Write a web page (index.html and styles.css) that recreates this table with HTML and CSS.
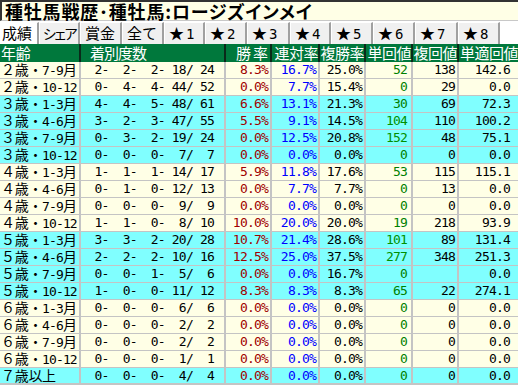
FILE: index.html
```html
<!DOCTYPE html>
<html lang="ja">
<head>
<meta charset="utf-8">
<title>種牡馬戦歴</title>
<link rel="stylesheet" href="styles.css">
</head>
<body>
<div class="title">種牡馬戦歴･種牡馬:ロージズインメイ</div>
<div class="tabs">
  <div class="tab active t1">成績</div>
  <div class="tab t2 sh">シェア</div>
  <div class="tab t3">賞金</div>
  <div class="tab t3">全て</div>
  <div class="tab t2">★<span class="a">1</span></div>
  <div class="tab t3">★<span class="a">2</span></div>
  <div class="tab t4">★<span class="a">3</span></div>
  <div class="tab t2">★<span class="a">4</span></div>
  <div class="tab t3">★<span class="a">5</span></div>
  <div class="tab t3">★<span class="a">6</span></div>
  <div class="tab t4">★<span class="a">7</span></div>
  <div class="tab t3">★<span class="a">8</span></div>
</div>
<div class="grid">
  <div class="row head">
    <div class="c c1">年齢</div><div class="c c2">着別度数</div><div class="c r wide">勝率</div><div class="c r">連対率</div><div class="c r">複勝率</div><div class="c r">単回値</div><div class="c r">複回値</div><div class="c r">単適回値</div>
  </div>
  <div class="row y"><div class="c c1">２歳・<span class="a">7-9</span>月</div><div class="c n c2"> 2-  2-  2- 18/ 24</div><div class="c n win">8.3%</div><div class="c n ren">16.7%</div><div class="c n fuku">25.0%</div><div class="c n tan">52</div><div class="c n fk">138</div><div class="c n tt">142.6</div></div>
  <div class="row y"><div class="c c1">２歳・<span class="a">10-12</span></div><div class="c n c2"> 0-  4-  4- 44/ 52</div><div class="c n win">0.0%</div><div class="c n ren">7.7%</div><div class="c n fuku">15.4%</div><div class="c n tan">0</div><div class="c n fk">29</div><div class="c n tt">0.0</div></div>
  <div class="row b"><div class="c c1">３歳・<span class="a">1-3</span>月</div><div class="c n c2"> 4-  4-  5- 48/ 61</div><div class="c n win">6.6%</div><div class="c n ren">13.1%</div><div class="c n fuku">21.3%</div><div class="c n tan">30</div><div class="c n fk">69</div><div class="c n tt">72.3</div></div>
  <div class="row b"><div class="c c1">３歳・<span class="a">4-6</span>月</div><div class="c n c2"> 3-  2-  3- 47/ 55</div><div class="c n win">5.5%</div><div class="c n ren">9.1%</div><div class="c n fuku">14.5%</div><div class="c n tan hi">104</div><div class="c n fk">110</div><div class="c n tt">100.2</div></div>
  <div class="row b"><div class="c c1">３歳・<span class="a">7-9</span>月</div><div class="c n c2"> 0-  3-  2- 19/ 24</div><div class="c n win">0.0%</div><div class="c n ren">12.5%</div><div class="c n fuku">20.8%</div><div class="c n tan hi">152</div><div class="c n fk">48</div><div class="c n tt">75.1</div></div>
  <div class="row b"><div class="c c1">３歳・<span class="a">10-12</span></div><div class="c n c2"> 0-  0-  0-  7/  7</div><div class="c n win">0.0%</div><div class="c n ren">0.0%</div><div class="c n fuku">0.0%</div><div class="c n tan">0</div><div class="c n fk">0</div><div class="c n tt">0.0</div></div>
  <div class="row y"><div class="c c1">４歳・<span class="a">1-3</span>月</div><div class="c n c2"> 1-  1-  1- 14/ 17</div><div class="c n win">5.9%</div><div class="c n ren">11.8%</div><div class="c n fuku">17.6%</div><div class="c n tan">53</div><div class="c n fk">115</div><div class="c n tt">115.1</div></div>
  <div class="row y"><div class="c c1">４歳・<span class="a">4-6</span>月</div><div class="c n c2"> 0-  1-  0- 12/ 13</div><div class="c n win">0.0%</div><div class="c n ren">7.7%</div><div class="c n fuku">7.7%</div><div class="c n tan">0</div><div class="c n fk">13</div><div class="c n tt">0.0</div></div>
  <div class="row y"><div class="c c1">４歳・<span class="a">7-9</span>月</div><div class="c n c2"> 0-  0-  0-  9/  9</div><div class="c n win">0.0%</div><div class="c n ren">0.0%</div><div class="c n fuku">0.0%</div><div class="c n tan">0</div><div class="c n fk">0</div><div class="c n tt">0.0</div></div>
  <div class="row y"><div class="c c1">４歳・<span class="a">10-12</span></div><div class="c n c2"> 1-  1-  0-  8/ 10</div><div class="c n win">10.0%</div><div class="c n ren">20.0%</div><div class="c n fuku">20.0%</div><div class="c n tan">19</div><div class="c n fk">218</div><div class="c n tt">93.9</div></div>
  <div class="row b"><div class="c c1">５歳・<span class="a">1-3</span>月</div><div class="c n c2"> 3-  3-  2- 20/ 28</div><div class="c n win">10.7%</div><div class="c n ren">21.4%</div><div class="c n fuku">28.6%</div><div class="c n tan hi">101</div><div class="c n fk">89</div><div class="c n tt">131.4</div></div>
  <div class="row b"><div class="c c1">５歳・<span class="a">4-6</span>月</div><div class="c n c2"> 2-  2-  2- 10/ 16</div><div class="c n win">12.5%</div><div class="c n ren">25.0%</div><div class="c n fuku">37.5%</div><div class="c n tan hi">277</div><div class="c n fk">348</div><div class="c n tt">251.3</div></div>
  <div class="row b"><div class="c c1">５歳・<span class="a">7-9</span>月</div><div class="c n c2"> 0-  0-  1-  5/  6</div><div class="c n win">0.0%</div><div class="c n ren">0.0%</div><div class="c n fuku">16.7%</div><div class="c n tan">0</div><div class="c n fk"></div><div class="c n tt">0.0</div></div>
  <div class="row b"><div class="c c1">５歳・<span class="a">10-12</span></div><div class="c n c2"> 1-  0-  0- 11/ 12</div><div class="c n win">8.3%</div><div class="c n ren">8.3%</div><div class="c n fuku">8.3%</div><div class="c n tan">65</div><div class="c n fk">22</div><div class="c n tt">274.1</div></div>
  <div class="row y"><div class="c c1">６歳・<span class="a">1-3</span>月</div><div class="c n c2"> 0-  0-  0-  6/  6</div><div class="c n win">0.0%</div><div class="c n ren">0.0%</div><div class="c n fuku">0.0%</div><div class="c n tan">0</div><div class="c n fk">0</div><div class="c n tt">0.0</div></div>
  <div class="row y"><div class="c c1">６歳・<span class="a">4-6</span>月</div><div class="c n c2"> 0-  0-  0-  2/  2</div><div class="c n win">0.0%</div><div class="c n ren">0.0%</div><div class="c n fuku">0.0%</div><div class="c n tan">0</div><div class="c n fk">0</div><div class="c n tt">0.0</div></div>
  <div class="row y"><div class="c c1">６歳・<span class="a">7-9</span>月</div><div class="c n c2"> 0-  0-  0-  2/  2</div><div class="c n win">0.0%</div><div class="c n ren">0.0%</div><div class="c n fuku">0.0%</div><div class="c n tan">0</div><div class="c n fk">0</div><div class="c n tt">0.0</div></div>
  <div class="row y"><div class="c c1">６歳・<span class="a">10-12</span></div><div class="c n c2"> 0-  0-  0-  1/  1</div><div class="c n win">0.0%</div><div class="c n ren">0.0%</div><div class="c n fuku">0.0%</div><div class="c n tan">0</div><div class="c n fk">0</div><div class="c n tt">0.0</div></div>
  <div class="row b"><div class="c c1">７歳以上</div><div class="c n c2"> 0-  0-  0-  4/  4</div><div class="c n win">0.0%</div><div class="c n ren">0.0%</div><div class="c n fuku">0.0%</div><div class="c n tan">0</div><div class="c n fk">0</div><div class="c n tt">0.0</div></div>
</div>
</body>
</html>
```
FILE: styles.css
```css
html, body {
  margin: 0;
  padding: 0;
  background: #ffffff;
}
body {
  width: 518px;
  height: 386px;
  overflow: hidden;
  font-family: "Noto Sans CJK JP", sans-serif;
  font-size: 14px;
  color: #000;
}
.title {
  box-sizing: border-box;
  height: 21px;
  border-top: 2px solid #333;
  border-left: 2px solid #333;
  border-bottom: 1px solid #c8c8c8;
  background: #ffffe6;
  padding-left: 3px;
  font-weight: bold;
  font-size: 18px;
  line-height: 18px;
  letter-spacing: 0.8px;
  font-feature-settings: "palt";
  white-space: nowrap;
}
.tabs {
  display: flex;
  height: 22px;
  margin-top: 1px;
  background: #ffffff;
}
.tab {
  box-sizing: border-box;
  height: 22px;
  background: #f0f0f0;
  border-top: 1px solid #ffffff;
  border-left: 1px solid #ffffff;
  border-right: 2px solid #a0a0a0;
  padding-left: 4px;
  line-height: 20px;
  font-size: 15px;
  white-space: nowrap;
}
.tab.sh {
  font-size: 14px;
  padding-left: 3px;
  letter-spacing: -1.5px;
  font-feature-settings: "palt";
}
.tab.active {
  background: #ffffff;
  border-left: none;
  padding-left: 2px;
}
.tab .a {
  font-family: "DejaVu Sans Mono", monospace;
  font-size: 14px;
  margin-left: 2px;
}
.t1 { width: 39px; }
.t2 { width: 41px; }
.t3 { width: 42px; }
.t4 { width: 43px; }
.grid {
  display: flex;
  flex-direction: column;
}
.row {
  display: grid;
  grid-template-columns: 81px 145px 46px 48px 46px 47px 46px 59px;
  height: 17px;
}
.row.head {
  height: 18px;
  background: #00783c;
  color: #ffffff;
}
.row.y { background: #ffffe6; }
.row.b { background: #80ffff; }
.c {
  box-sizing: border-box;
  border-right: 2px solid #c4c4c4;
  border-bottom: 2px solid #c4c4c4;
  line-height: 15px;
  white-space: pre;
}
.c:last-child { border-right: none; }
.head .c {
  border-right: 2px solid #0a2a1a;
  border-bottom: none;
  line-height: 18px;
  font-size: 15px;
}
.head .c:last-child { border-right: none; }
.head .r { text-align: right; padding-right: 0; letter-spacing: -0.5px; }
.head .wide { letter-spacing: 2px; }
.head .c2 { padding-left: 9px; letter-spacing: -1px; }
.c1 {
  padding-left: 1px;
  font-size: 14px;
  letter-spacing: -0.3px;
}
.c1 .a {
  font-family: "DejaVu Sans Mono", monospace;
  font-size: 13px;
  letter-spacing: -0.9px;
}
.n {
  text-align: right;
  font-family: "DejaVu Sans Mono", monospace;
  font-size: 13px;
  letter-spacing: -0.8px;
  padding-right: 2px;
}
.n.c2 { padding-right: 10px; }
.win { color: #a00000; }
.ren { color: #0000ff; }
.fuku { color: #000000; }
.tan { color: #008000; padding-right: 4px; }
.tan.hi { color: #009000; }
.fk { color: #000000; padding-right: 2px; }
.tt { color: #000000; padding-right: 8px; }
```
